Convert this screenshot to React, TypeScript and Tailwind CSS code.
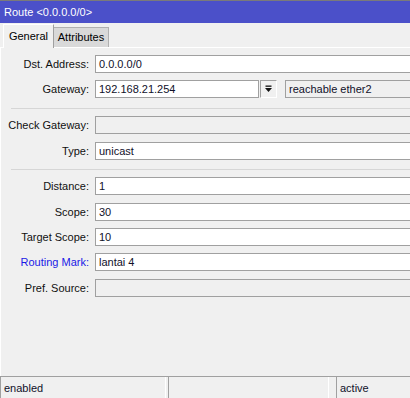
import React from "react";

const font = { fontFamily: '"Liberation Sans", Arial, sans-serif' };

function Field({ value, disabled }: { value?: string; disabled?: boolean }) {
  return (
    <div
      className={`flex-1 h-[18px] border border-[#a0a0a0] mr-[-4px] flex items-center pl-[3px] text-[11px] text-[#10102a] ${
        disabled ? "bg-[#f0f0f0]" : "bg-white"
      }`}
    >
      {value}
    </div>
  );
}

function Row({
  label,
  value,
  disabled,
  blue,
  mt,
}: {
  label: string;
  value?: string;
  disabled?: boolean;
  blue?: boolean;
  mt: string;
}) {
  return (
    <div className={`flex items-center ${mt}`}>
      <div
        className={`w-[88px] shrink-0 text-right text-[11px] leading-none ${
          blue ? "text-[#1a1ae6]" : "text-[#101010]"
        }`}
      >
        {label}
      </div>
      <div className="w-[6px] shrink-0" />
      <Field value={value} disabled={disabled} />
    </div>
  );
}

function Separator({ mt }: { mt: string }) {
  return <div className={`ml-[10px] h-[1px] bg-[#d6d6d6] ${mt}`} />;
}

export default function App() {
  return (
    <div
      className="w-[410px] h-[398px] bg-[#f0f0f0] overflow-hidden flex flex-col"
      style={font}
    >
      {/* title bar */}
      <div className="h-[23px] shrink-0 border-t border-[#7a7a7a] bg-[#4b50c9] text-white text-[11px] flex items-center px-[4px]">
        Route &lt;0.0.0.0/0&gt;
      </div>

      {/* tabs */}
      <div className="h-[25px] shrink-0 flex items-end px-[3px] border-b border-white relative">
        <div className="w-[51px] h-[24px] mb-[-1px] bg-[#f0f0f0] border-l border-t border-white border-r border-r-[#a0a0a0] flex items-center justify-center text-[11px] text-black relative z-10">
          General
        </div>
        <div className="w-[55px] h-[20px] bg-[#d9d9d9] border-t border-r border-[#b0b0b0] flex items-center justify-center text-[11px] text-black">
          Attributes
        </div>
      </div>

      {/* content */}
      <div className="flex-1 flex flex-col border-l border-white">
        <Row label="Dst. Address:" value="0.0.0.0/0" mt="mt-[7px]" />

        <div className="flex items-center mt-[7px]">
          <div className="w-[88px] shrink-0 text-right text-[11px] leading-none text-[#101010]">
            Gateway:
          </div>
          <div className="w-[6px] shrink-0" />
          <div className="w-[164px] h-[18px] shrink-0 border border-[#a0a0a0] bg-white flex items-center pl-[3px] text-[11px] text-[#10102a]">
            192.168.21.254
          </div>
          <div className="ml-[1px] w-[17px] h-[18px] shrink-0 border border-[#a0a0a0] border-r-white border-b-white bg-[#f0f0f0] flex items-center justify-center">
            <svg width="7" height="8" viewBox="0 0 7 8">
              <rect x="0.5" y="0.5" width="6" height="1.3" fill="#111" />
              <polygon points="0,3 7,3 3.5,7" fill="#111" />
            </svg>
          </div>
          <div className="ml-[8px] flex-1 h-[18px] border border-[#a0a0a0] mr-[-4px] bg-[#f0f0f0] flex items-center pl-[3px] text-[11px] text-[#10102a]">
            reachable ether2
          </div>
        </div>

        <Separator mt="mt-[10px]" />

        <Row label="Check Gateway:" disabled mt="mt-[7px]" />
        <Row label="Type:" value="unicast" mt="mt-[8px]" />

        <Separator mt="mt-[9px]" />

        <Row label="Distance:" value="1" mt="mt-[7px]" />
        <Row label="Scope:" value="30" mt="mt-[8px]" />
        <Row label="Target Scope:" value="10" mt="mt-[7px]" />
        <Row label="Routing Mark:" value="lantai 4" blue mt="mt-[7px]" />
        <Row label="Pref. Source:" disabled mt="mt-[8px]" />
      </div>

      {/* status bar */}
      <div className="h-[22px] shrink-0 border-t border-[#a0a0a0] flex text-[11px] text-[#10102a]">
        <div className="w-[166px] border-l border-[#a0a0a0] border-r border-r-white flex items-center pl-[3px] pt-[1px]">
          enabled
        </div>
        <div className="ml-[2px] w-[161px] border-l border-[#a0a0a0] border-r border-r-white" />
        <div className="ml-[7px] flex-1 border-l border-[#a0a0a0] flex items-center pl-[3px] pt-[1px]">
          active
        </div>
      </div>
    </div>
  );
}
